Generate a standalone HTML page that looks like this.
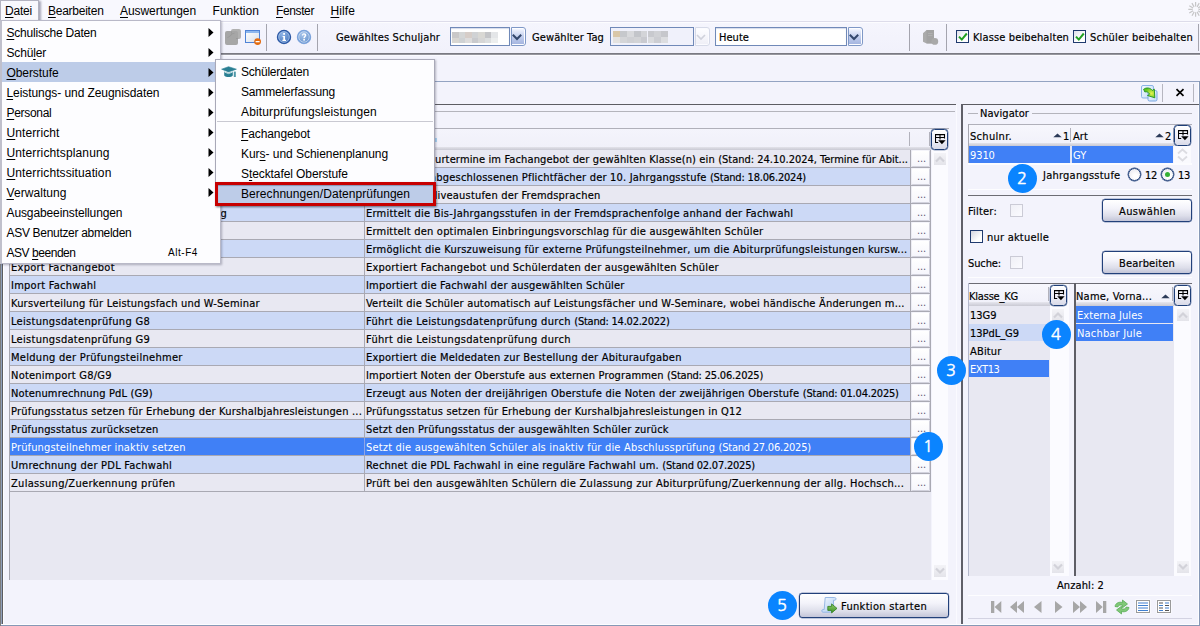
<!DOCTYPE html>
<html lang="de"><head><meta charset="utf-8"><title>ASV</title>
<style>
html,body{margin:0;padding:0}
body{width:1200px;height:626px;overflow:hidden;position:relative;background:#f3f3fc;color:#000}
div,span,svg{position:absolute;box-sizing:border-box}
.s{position:static}
.t{white-space:pre;line-height:16px;height:16px}
.j{font-family:"DejaVu Sans Condensed","Liberation Sans",sans-serif;font-size:11px;-webkit-text-stroke:.18px currentColor}
.m{font-family:"Liberation Sans",sans-serif;font-size:12px}
u{text-decoration:underline;text-underline-offset:2px;text-decoration-thickness:1px}
.btn{border:1px solid #22407a;border-radius:3px;box-shadow:0 0 0 .15px #22407a;background:linear-gradient(#ffffff 0%,#f3f3fa 40%,#dddeea 75%,#c3c5d8 100%)}
.cc{border:1px solid #1f3f78;border-radius:3.500px;box-shadow:0 0 0 .25px #1f3f78;background:linear-gradient(#ffffff 0%,#f0f0f8 50%,#d8dae8 100%)}
.circ{border-radius:50%;background:#0a84ff;color:#fff;font-family:"NanumGothic","Liberation Sans",sans-serif;text-align:center;text-indent:-1px;-webkit-text-stroke:.42px #fff}

</style></head>
<body>
<div style="left:0px;top:0px;width:1200px;height:21px;background:#f8f8fe;"></div>
<div style="left:0px;top:21px;width:1200px;height:1px;background:#dddcea;"></div>
<div style="left:0px;top:22px;width:1200px;height:1px;background:#fcfcff;"></div>
<svg style="left:1186px;top:1px" width="14" height="18" viewBox="0 0 14 18"><path d="M12.5 8.4L16.9 8.4M12.1 9.8L15.9 12.1M11.1 10.9L13.2 14.7M9.6 11.3L9.6 15.7M8.2 10.9L6.0 14.7M7.1 9.8L3.3 12.1M6.7 8.4L2.3 8.4M7.1 7.0L3.3 4.8M8.1 5.9L5.9 2.1M9.6 5.5L9.6 1.1M11.1 5.9L13.2 2.1M12.1 6.9L15.9 4.7" stroke="#c6c6c8" stroke-width="1.200" fill="none"/></svg>
<div style="left:0px;top:23px;width:1200px;height:30px;background:linear-gradient(#f5f5fd,#f1f1fb);"></div>
<div style="left:0px;top:53px;width:1200px;height:2px;background:linear-gradient(#6c6c74,#a4a4ac);"></div>
<div style="left:0px;top:55px;width:1200px;height:1px;background:#fbfbff;"></div>
<div style="left:231px;top:29px;width:10px;height:10px;background:#b1b1b1;border-radius:2px"></div>
<div style="left:225px;top:31px;width:13px;height:14px;background:#a6a6a6;border-radius:2px"></div>
<svg style="left:225px;top:29px" width="16" height="16" viewBox="0 0 16 16"><path d="M2.500 9c1.500-2.500 3-1 3.500-3s2.500-1 3.500-1.800M6.500 2.500v2M13 9.500h-2" fill="none" stroke="#979797" stroke-width=".8"/></svg>
<svg style="left:244px;top:29px" width="18" height="17" viewBox="0 0 18 17"><defs><linearGradient id="wg" x1="0" y1="0" x2="1" y2="1"><stop offset="0" stop-color="#fff"/><stop offset="1" stop-color="#d5deea"/></linearGradient></defs><rect x="1.5" y="1.5" width="14" height="12" fill="url(#wg)" stroke="#4f83d6"/><rect x="2" y="2" width="13" height="2" fill="#8db7ee"/><circle cx="13.6" cy="12.6" r="3.4" fill="#e36a0e"/><rect x="11.6" y="12" width="4" height="1.3" fill="#fff"/></svg>
<div style="left:266px;top:24px;width:1px;height:27px;background:#a4a4ae;"></div>
<svg style="left:276px;top:29px" width="16" height="16" viewBox="0 0 16 16"><defs><radialGradient id="ig" cx=".4" cy=".3" r=".8"><stop offset="0" stop-color="#8fb4e6"/><stop offset="1" stop-color="#3f6fb6"/></radialGradient></defs><circle cx="8" cy="8" r="6.6" fill="url(#ig)" stroke="#2c58a4" stroke-width="1.2"/><circle cx="8" cy="8" r="5.2" fill="none" stroke="#a9c4ea" stroke-width=".7"/><rect x="7.2" y="4" width="1.8" height="1.8" fill="#fff"/><path d="M6.6 7h2.4v3.8h1v1.1H6.4v-1.1h.9V8.1h-.7z" fill="#fff"/></svg>
<svg style="left:296px;top:29px" width="16" height="16" viewBox="0 0 16 16"><defs><radialGradient id="hg" cx=".4" cy=".3" r=".8"><stop offset="0" stop-color="#a9c6ec"/><stop offset="1" stop-color="#5e8cc8"/></radialGradient></defs><circle cx="8" cy="8" r="6.6" fill="url(#hg)" stroke="#7ba3dc" stroke-width="1.2"/><circle cx="8" cy="8" r="5.2" fill="none" stroke="#c9dcf4" stroke-width=".8"/><path d="M5.9 6.6c0-1.5 1-2.4 2.2-2.4s2.2.8 2.2 2c0 1.5-1.5 1.6-1.5 3H7.4c0-1.7 1.3-1.9 1.3-2.9 0-.5-.3-.8-.7-.8s-.8.3-.8 1.100z" fill="#fff"/><rect x="7.300" y="10" width="1.600" height="1.600" fill="#fff"/></svg>
<div style="left:317px;top:24px;width:1px;height:27px;background:#a4a4ae;"></div>
<span class="t j" style="top:30px;left:336px;letter-spacing:0.14px;">Gewähltes Schuljahr</span>
<div style="left:450px;top:27px;width:60px;height:19px;background:#fff;border:1px solid #7089b8;box-shadow:inset 0 1px 1px #d5dbec"></div>
<div style="left:511px;top:27px;width:15px;height:19px;background:#fdfdff;border:1px solid #7f98c6;border-radius:0 3px 3px 0"></div>
<div style="left:511.5px;top:29px;width:12.5px;height:15px;background:linear-gradient(#f2f5ff,#c3cfee 50%,#a5b5e0);"></div>
<svg style="left:512px;top:33.500px" width="10" height="7" viewBox="0 0 10 7"><path d="M.8 .8l4.200 4.200 4.200-4.200" fill="none" stroke="#33476c" stroke-width="2"/></svg>
<div style="left:452.0px;top:32px;width:6.5px;height:5.5px;background:#c9c8c8;"></div>
<div style="left:452.0px;top:37.5px;width:6.5px;height:5.5px;background:#d8d6d2;"></div>
<div style="left:458.5px;top:32px;width:6.5px;height:5.5px;background:#d4d6d6;"></div>
<div style="left:458.5px;top:37.5px;width:6.5px;height:5.5px;background:#cfd2d4;"></div>
<div style="left:465.0px;top:32px;width:6.5px;height:5.5px;background:#d6cdc8;"></div>
<div style="left:465.0px;top:37.5px;width:6.5px;height:5.5px;background:#dddcdc;"></div>
<div style="left:471.5px;top:32px;width:6.5px;height:5.5px;background:#d0d2d4;"></div>
<div style="left:471.5px;top:37.5px;width:6.5px;height:5.5px;background:#c9cacd;"></div>
<div style="left:478.0px;top:32px;width:6.5px;height:5.5px;background:#d9d8d4;"></div>
<div style="left:478.0px;top:37.5px;width:6.5px;height:5.5px;background:#d6d6d6;"></div>
<div style="left:484.5px;top:32px;width:6.5px;height:5.5px;background:#c4c5c8;"></div>
<div style="left:484.5px;top:37.5px;width:6.5px;height:5.5px;background:#dcdedf;"></div>
<div style="left:491.0px;top:32px;width:6.5px;height:5.5px;background:#e4e6e8;"></div>
<div style="left:491.0px;top:37.5px;width:6.5px;height:5.5px;background:#eceeee;"></div>
<span class="t j" style="top:30px;left:532px;letter-spacing:0.1px;">Gewählter Tag</span>
<div style="left:610px;top:27px;width:84px;height:19px;background:#f0f1fb;border:1px solid #7089b8"></div>
<div style="left:695px;top:27px;width:15px;height:19px;background:#fbfbff;border:1px solid #d6dae8;border-radius:0 3px 3px 0"></div>
<div style="left:695.5px;top:29px;width:12.5px;height:15px;background:linear-gradient(#fdfdff,#efeff7);"></div>
<svg style="left:696px;top:33.500px" width="10" height="7" viewBox="0 0 10 7"><path d="M1 1l4 4 4-4" fill="none" stroke="#d0d2dc" stroke-width="1.700"/></svg>
<div style="left:613.0px;top:31px;width:6.9px;height:6px;background:#d9c7a8;"></div>
<div style="left:613.0px;top:37px;width:6.9px;height:6px;background:#e4e2e0;"></div>
<div style="left:619.9px;top:31px;width:6.9px;height:6px;background:#c6c8cc;"></div>
<div style="left:619.9px;top:37px;width:6.9px;height:6px;background:#d4d5d8;"></div>
<div style="left:626.8px;top:31px;width:6.9px;height:6px;background:#d8d9dc;"></div>
<div style="left:626.8px;top:37px;width:6.9px;height:6px;background:#cfd0d4;"></div>
<div style="left:633.7px;top:31px;width:6.9px;height:6px;background:#c3c5ca;"></div>
<div style="left:633.7px;top:37px;width:6.9px;height:6px;background:#d2d3d6;"></div>
<div style="left:640.6px;top:31px;width:6.9px;height:6px;background:#d3d4d8;"></div>
<div style="left:640.6px;top:37px;width:6.9px;height:6px;background:#c9cad0;"></div>
<div style="left:647.5px;top:31px;width:6.9px;height:6px;background:#c8c9ce;"></div>
<div style="left:647.5px;top:37px;width:6.9px;height:6px;background:#d9dadd;"></div>
<div style="left:654.4px;top:31px;width:6.9px;height:6px;background:#d0d1d5;"></div>
<div style="left:654.4px;top:37px;width:6.9px;height:6px;background:#cccdd2;"></div>
<div style="left:661.3px;top:31px;width:6.9px;height:6px;background:#c6c7cc;"></div>
<div style="left:661.3px;top:37px;width:6.9px;height:6px;background:#dcdde0;"></div>
<div style="left:715px;top:27px;width:132px;height:19px;background:#fff;border:1px solid #7089b8;box-shadow:inset 0 1px 1px #d5dbec"></div>
<div style="left:848px;top:27px;width:15px;height:19px;background:#fdfdff;border:1px solid #7f98c6;border-radius:0 3px 3px 0"></div>
<div style="left:848.5px;top:29px;width:12.5px;height:15px;background:linear-gradient(#f2f5ff,#c3cfee 50%,#a5b5e0);"></div>
<svg style="left:849px;top:33.500px" width="10" height="7" viewBox="0 0 10 7"><path d="M.8 .8l4.200 4.200 4.200-4.200" fill="none" stroke="#33476c" stroke-width="2"/></svg>
<span class="t j" style="top:30px;left:719px;letter-spacing:0.04px;">Heute</span>
<div style="left:909px;top:24px;width:1px;height:27px;background:#a4a4ae;"></div>
<svg style="left:922px;top:29px" width="18" height="17" viewBox="0 0 18 17"><path d="M1 4.200L4.600 1H12v13.400H4.600L1 12.800z" fill="#ababab"/><path d="M4.600 1H12v13.400H4.600z" fill="#a3a3a3"/><path d="M6 4.500h4.500M6 6.500h4.500" stroke="#b4b4b4" stroke-width=".8"/><circle cx="12.800" cy="12.400" r="3.400" fill="#a9a9a9"/></svg>
<div style="left:946px;top:24px;width:1px;height:27px;background:#a4a4ae;"></div>
<div style="left:956px;top:30px;width:13px;height:13px;background:linear-gradient(135deg,#dfe1ea,#ffffff 60%);border:1px solid #1f3a6e"></div>
<svg style="left:958px;top:32px" width="10" height="10" viewBox="0 0 10 10"><path d="M1 4.600l2.800 3L8.800 1.500" fill="none" stroke="#21a121" stroke-width="2"/></svg>
<span class="t j" style="top:30px;left:973px;letter-spacing:0.13px;">Klasse beibehalten</span>
<div style="left:1073px;top:30px;width:13px;height:13px;background:linear-gradient(135deg,#dfe1ea,#ffffff 60%);border:1px solid #1f3a6e"></div>
<svg style="left:1075px;top:32px" width="10" height="10" viewBox="0 0 10 10"><path d="M1 4.600l2.800 3L8.800 1.500" fill="none" stroke="#21a121" stroke-width="2"/></svg>
<span class="t j" style="top:30px;left:1090px;letter-spacing:0.2px;">Schüler beibehalten</span>
<div style="left:1198px;top:24px;width:1px;height:27px;background:#a4a4ae;"></div>
<div style="left:0px;top:81px;width:1199px;height:1px;background:#93a3c2;"></div>
<div style="left:1198px;top:82px;width:1px;height:543px;background:#fdfdff;"></div>
<div style="left:1199px;top:81px;width:1px;height:545px;background:#8698b6;"></div>
<svg style="left:1141px;top:85px" width="17" height="17" viewBox="0 0 17 17"><defs><linearGradient id="gb" x1="0" y1="0" x2="1" y2="1"><stop offset="0" stop-color="#f2f8ff"/><stop offset="1" stop-color="#c4dcf6"/></linearGradient><radialGradient id="ga" cx=".7" cy=".55" r=".6"><stop offset="0" stop-color="#e4f24e"/><stop offset="1" stop-color="#5cc420"/></radialGradient></defs><rect x=".5" y=".5" width="12" height="12.500" rx="1.500" fill="url(#gb)" stroke="#8bb4e6"/><rect x="7" y="5.500" width="9" height="10.500" rx="1.500" fill="url(#gb)" stroke="#7aa8e2"/><path d="M2.600 4.300C5 2.300 9.200 2.500 11.300 5.400l2-1.300.5 8.700-7.300-2.300 2.100-1.300C7.400 6.900 5.300 6.300 3.900 7z" fill="url(#ga)" stroke="#1f901f" stroke-width=".9" stroke-linejoin="round"/></svg>
<div style="left:1162px;top:84px;width:1px;height:18px;background:#b6b6c0;"></div>
<svg style="left:1175px;top:88px" width="10" height="9" viewBox="0 0 10 9"><path d="M1.500 1.200l7 6.600M8.500 1.200l-7 6.600" stroke="#000" stroke-width="1.700"/></svg>
<div style="left:1193px;top:84px;width:1px;height:18px;background:#b6b6c0;"></div>
<div style="left:2px;top:104px;width:954px;height:1px;background:#5c5c62;"></div>
<div style="left:0px;top:82px;width:1px;height:544px;background:#7c7c7c;"></div>
<div style="left:1px;top:82px;width:1px;height:544px;background:#8fa0bc;"></div>
<div style="left:2px;top:104px;width:1px;height:520px;background:#5c5c60;"></div>
<div style="left:3px;top:105px;width:1px;height:519px;background:#fdfdff;"></div>
<div style="left:4px;top:111px;width:951px;height:1px;background:#b4b4bc;"></div>
<div style="left:1px;top:624px;width:1198px;height:1px;background:#fdfdff;"></div>
<div style="left:1px;top:625px;width:1199px;height:1px;background:#8698b6;"></div>
<div style="left:9px;top:128px;width:940px;height:1px;background:#b0b0ba;"></div>
<div style="left:9px;top:128px;width:1px;height:452px;background:#a6a6b0;"></div>
<div style="left:10px;top:129px;width:921px;height:19px;background:linear-gradient(#f4f4fc,#f0f0f9);"></div>
<div style="left:10px;top:147px;width:921px;height:3px;background:linear-gradient(#e2e2ea,#c9c9d3);"></div>
<div style="left:364px;top:132px;width:1px;height:14px;background:#b2b2bc;"></div>
<div style="left:909px;top:132px;width:1px;height:14px;background:#b2b2bc;"></div>
<div style="left:929px;top:132px;width:1px;height:14px;background:#b2b2bc;"></div>
<div style="left:435px;top:138px;width:2px;height:4px;background:#a8d4f4;"></div>
<div style="left:10px;top:150px;width:921px;height:430px;background:#e8e8f2;"></div>
<div style="left:932px;top:150px;width:16px;height:430px;background:#fbfbff;"></div>
<div style="left:10px;top:150px;width:900px;height:17px;background:#e8e8f2;"></div>
<div style="left:10px;top:167px;width:921px;height:1px;background:#a9a9b3;"></div>
<div style="left:364px;top:150px;width:1px;height:17px;background:#a9a9b3;"></div>
<div style="left:910px;top:150px;width:1px;height:18px;background:#a9a9b3;"></div>
<div style="left:911px;top:150px;width:19px;height:17px;background:linear-gradient(#ffffff,#f6f6fc);border:1px solid #d2d2dd;border-top-color:#f4f4fa;border-left-color:#ececf4;border-radius:2px"></div>
<span class="t j" style="top:151px;left:917px;letter-spacing:-0.15px;color:#5e5672;-webkit-text-stroke:0;">...</span>
<div style="left:930px;top:150px;width:1px;height:18px;background:#a9a9b3;"></div>
<div style="left:10px;top:168px;width:900px;height:17px;background:#ccd9f6;"></div>
<div style="left:10px;top:185px;width:921px;height:1px;background:#a9a9b3;"></div>
<div style="left:364px;top:168px;width:1px;height:17px;background:#a9a9b3;"></div>
<div style="left:910px;top:168px;width:1px;height:18px;background:#a9a9b3;"></div>
<div style="left:911px;top:168px;width:19px;height:17px;background:linear-gradient(#ffffff,#f6f6fc);border:1px solid #d2d2dd;border-top-color:#f4f4fa;border-left-color:#ececf4;border-radius:2px"></div>
<span class="t j" style="top:169px;left:917px;letter-spacing:-0.15px;color:#5e5672;-webkit-text-stroke:0;">...</span>
<div style="left:930px;top:168px;width:1px;height:18px;background:#a9a9b3;"></div>
<div style="left:10px;top:186px;width:900px;height:17px;background:#e8e8f2;"></div>
<div style="left:10px;top:203px;width:921px;height:1px;background:#a9a9b3;"></div>
<div style="left:364px;top:186px;width:1px;height:17px;background:#a9a9b3;"></div>
<div style="left:910px;top:186px;width:1px;height:18px;background:#a9a9b3;"></div>
<div style="left:911px;top:186px;width:19px;height:17px;background:linear-gradient(#ffffff,#f6f6fc);border:1px solid #d2d2dd;border-top-color:#f4f4fa;border-left-color:#ececf4;border-radius:2px"></div>
<span class="t j" style="top:187px;left:917px;letter-spacing:-0.15px;color:#5e5672;-webkit-text-stroke:0;">...</span>
<div style="left:930px;top:186px;width:1px;height:18px;background:#a9a9b3;"></div>
<div style="left:10px;top:204px;width:900px;height:17px;background:#ccd9f6;"></div>
<div style="left:10px;top:221px;width:921px;height:1px;background:#a9a9b3;"></div>
<div style="left:364px;top:204px;width:1px;height:17px;background:#a9a9b3;"></div>
<div style="left:910px;top:204px;width:1px;height:18px;background:#a9a9b3;"></div>
<div style="left:911px;top:204px;width:19px;height:17px;background:linear-gradient(#ffffff,#f6f6fc);border:1px solid #d2d2dd;border-top-color:#f4f4fa;border-left-color:#ececf4;border-radius:2px"></div>
<span class="t j" style="top:205px;left:917px;letter-spacing:-0.15px;color:#5e5672;-webkit-text-stroke:0;">...</span>
<div style="left:930px;top:204px;width:1px;height:18px;background:#a9a9b3;"></div>
<span class="t j" style="top:206px;left:366px;letter-spacing:0.24px;">Ermittelt die Bis-Jahrgangsstufen in der Fremdsprachenfolge anhand der Fachwahl</span>
<div style="left:10px;top:222px;width:900px;height:17px;background:#e8e8f2;"></div>
<div style="left:10px;top:239px;width:921px;height:1px;background:#a9a9b3;"></div>
<div style="left:364px;top:222px;width:1px;height:17px;background:#a9a9b3;"></div>
<div style="left:910px;top:222px;width:1px;height:18px;background:#a9a9b3;"></div>
<div style="left:911px;top:222px;width:19px;height:17px;background:linear-gradient(#ffffff,#f6f6fc);border:1px solid #d2d2dd;border-top-color:#f4f4fa;border-left-color:#ececf4;border-radius:2px"></div>
<span class="t j" style="top:223px;left:917px;letter-spacing:-0.15px;color:#5e5672;-webkit-text-stroke:0;">...</span>
<div style="left:930px;top:222px;width:1px;height:18px;background:#a9a9b3;"></div>
<span class="t j" style="top:224px;left:366px;letter-spacing:0.21px;">Ermittelt den optimalen Einbringungsvorschlag für die ausgewählten Schüler</span>
<div style="left:10px;top:240px;width:900px;height:17px;background:#ccd9f6;"></div>
<div style="left:10px;top:257px;width:921px;height:1px;background:#a9a9b3;"></div>
<div style="left:364px;top:240px;width:1px;height:17px;background:#a9a9b3;"></div>
<div style="left:910px;top:240px;width:1px;height:18px;background:#a9a9b3;"></div>
<div style="left:911px;top:240px;width:19px;height:17px;background:linear-gradient(#ffffff,#f6f6fc);border:1px solid #d2d2dd;border-top-color:#f4f4fa;border-left-color:#ececf4;border-radius:2px"></div>
<span class="t j" style="top:241px;left:917px;letter-spacing:-0.15px;color:#5e5672;-webkit-text-stroke:0;">...</span>
<div style="left:930px;top:240px;width:1px;height:18px;background:#a9a9b3;"></div>
<span class="t j" style="top:242px;left:366px;letter-spacing:0.24px;">Ermöglicht die Kurszuweisung für externe Prüfungsteilnehmer, um die Abiturprüfungsleistungen kursw...</span>
<div style="left:10px;top:258px;width:900px;height:17px;background:#e8e8f2;"></div>
<div style="left:10px;top:275px;width:921px;height:1px;background:#a9a9b3;"></div>
<div style="left:364px;top:258px;width:1px;height:17px;background:#a9a9b3;"></div>
<div style="left:910px;top:258px;width:1px;height:18px;background:#a9a9b3;"></div>
<div style="left:911px;top:258px;width:19px;height:17px;background:linear-gradient(#ffffff,#f6f6fc);border:1px solid #d2d2dd;border-top-color:#f4f4fa;border-left-color:#ececf4;border-radius:2px"></div>
<span class="t j" style="top:259px;left:917px;letter-spacing:-0.15px;color:#5e5672;-webkit-text-stroke:0;">...</span>
<div style="left:930px;top:258px;width:1px;height:18px;background:#a9a9b3;"></div>
<span class="t j" style="top:260px;left:11px;letter-spacing:0.27px;">Export Fachangebot</span>
<span class="t j" style="top:260px;left:366px;letter-spacing:0.22px;">Exportiert Fachangebot und Schülerdaten der ausgewählten Schüler</span>
<div style="left:10px;top:276px;width:900px;height:17px;background:#ccd9f6;"></div>
<div style="left:10px;top:293px;width:921px;height:1px;background:#a9a9b3;"></div>
<div style="left:364px;top:276px;width:1px;height:17px;background:#a9a9b3;"></div>
<div style="left:910px;top:276px;width:1px;height:18px;background:#a9a9b3;"></div>
<div style="left:911px;top:276px;width:19px;height:17px;background:linear-gradient(#ffffff,#f6f6fc);border:1px solid #d2d2dd;border-top-color:#f4f4fa;border-left-color:#ececf4;border-radius:2px"></div>
<span class="t j" style="top:277px;left:917px;letter-spacing:-0.15px;color:#5e5672;-webkit-text-stroke:0;">...</span>
<div style="left:930px;top:276px;width:1px;height:18px;background:#a9a9b3;"></div>
<span class="t j" style="top:278px;left:11px;letter-spacing:0.25px;">Import Fachwahl</span>
<span class="t j" style="top:278px;left:366px;letter-spacing:0.2px;">Importiert die Fachwahl der ausgewählten Schüler</span>
<div style="left:10px;top:294px;width:900px;height:17px;background:#e8e8f2;"></div>
<div style="left:10px;top:311px;width:921px;height:1px;background:#a9a9b3;"></div>
<div style="left:364px;top:294px;width:1px;height:17px;background:#a9a9b3;"></div>
<div style="left:910px;top:294px;width:1px;height:18px;background:#a9a9b3;"></div>
<div style="left:911px;top:294px;width:19px;height:17px;background:linear-gradient(#ffffff,#f6f6fc);border:1px solid #d2d2dd;border-top-color:#f4f4fa;border-left-color:#ececf4;border-radius:2px"></div>
<span class="t j" style="top:295px;left:917px;letter-spacing:-0.15px;color:#5e5672;-webkit-text-stroke:0;">...</span>
<div style="left:930px;top:294px;width:1px;height:18px;background:#a9a9b3;"></div>
<span class="t j" style="top:296px;left:11px;letter-spacing:0.2px;">Kursverteilung für Leistungsfach und W-Seminar</span>
<span class="t j" style="top:296px;left:366px;letter-spacing:0.19px;">Verteilt die Schüler automatisch auf Leistungsfächer und W-Seminare, wobei händische Änderungen m...</span>
<div style="left:10px;top:312px;width:900px;height:17px;background:#ccd9f6;"></div>
<div style="left:10px;top:329px;width:921px;height:1px;background:#a9a9b3;"></div>
<div style="left:364px;top:312px;width:1px;height:17px;background:#a9a9b3;"></div>
<div style="left:910px;top:312px;width:1px;height:18px;background:#a9a9b3;"></div>
<div style="left:911px;top:312px;width:19px;height:17px;background:linear-gradient(#ffffff,#f6f6fc);border:1px solid #d2d2dd;border-top-color:#f4f4fa;border-left-color:#ececf4;border-radius:2px"></div>
<span class="t j" style="top:313px;left:917px;letter-spacing:-0.15px;color:#5e5672;-webkit-text-stroke:0;">...</span>
<div style="left:930px;top:312px;width:1px;height:18px;background:#a9a9b3;"></div>
<span class="t j" style="top:314px;left:11px;letter-spacing:0.3px;">Leistungsdatenprüfung G8</span>
<span class="t j" style="top:314px;left:366px;"><span class="s" style="letter-spacing:0.32px">Führt die Leistungsdatenprüfung durch </span><span class="s" style="letter-spacing:-0.23px">(Stand: 14.02.2022)</span></span>
<div style="left:10px;top:330px;width:900px;height:17px;background:#e8e8f2;"></div>
<div style="left:10px;top:347px;width:921px;height:1px;background:#a9a9b3;"></div>
<div style="left:364px;top:330px;width:1px;height:17px;background:#a9a9b3;"></div>
<div style="left:910px;top:330px;width:1px;height:18px;background:#a9a9b3;"></div>
<div style="left:911px;top:330px;width:19px;height:17px;background:linear-gradient(#ffffff,#f6f6fc);border:1px solid #d2d2dd;border-top-color:#f4f4fa;border-left-color:#ececf4;border-radius:2px"></div>
<span class="t j" style="top:331px;left:917px;letter-spacing:-0.15px;color:#5e5672;-webkit-text-stroke:0;">...</span>
<div style="left:930px;top:330px;width:1px;height:18px;background:#a9a9b3;"></div>
<span class="t j" style="top:332px;left:11px;letter-spacing:0.3px;">Leistungsdatenprüfung G9</span>
<span class="t j" style="top:332px;left:366px;letter-spacing:0.32px;">Führt die Leistungsdatenprüfung durch</span>
<div style="left:10px;top:348px;width:900px;height:17px;background:#ccd9f6;"></div>
<div style="left:10px;top:365px;width:921px;height:1px;background:#a9a9b3;"></div>
<div style="left:364px;top:348px;width:1px;height:17px;background:#a9a9b3;"></div>
<div style="left:910px;top:348px;width:1px;height:18px;background:#a9a9b3;"></div>
<div style="left:911px;top:348px;width:19px;height:17px;background:linear-gradient(#ffffff,#f6f6fc);border:1px solid #d2d2dd;border-top-color:#f4f4fa;border-left-color:#ececf4;border-radius:2px"></div>
<span class="t j" style="top:349px;left:917px;letter-spacing:-0.15px;color:#5e5672;-webkit-text-stroke:0;">...</span>
<div style="left:930px;top:348px;width:1px;height:18px;background:#a9a9b3;"></div>
<span class="t j" style="top:350px;left:11px;letter-spacing:0.3px;">Meldung der Prüfungsteilnehmer</span>
<span class="t j" style="top:350px;left:366px;letter-spacing:0.22px;">Exportiert die Meldedaten zur Bestellung der Abituraufgaben</span>
<div style="left:10px;top:366px;width:900px;height:17px;background:#e8e8f2;"></div>
<div style="left:10px;top:383px;width:921px;height:1px;background:#a9a9b3;"></div>
<div style="left:364px;top:366px;width:1px;height:17px;background:#a9a9b3;"></div>
<div style="left:910px;top:366px;width:1px;height:18px;background:#a9a9b3;"></div>
<div style="left:911px;top:366px;width:19px;height:17px;background:linear-gradient(#ffffff,#f6f6fc);border:1px solid #d2d2dd;border-top-color:#f4f4fa;border-left-color:#ececf4;border-radius:2px"></div>
<span class="t j" style="top:367px;left:917px;letter-spacing:-0.15px;color:#5e5672;-webkit-text-stroke:0;">...</span>
<div style="left:930px;top:366px;width:1px;height:18px;background:#a9a9b3;"></div>
<span class="t j" style="top:368px;left:11px;letter-spacing:0.23px;">Notenimport G8/G9</span>
<span class="t j" style="top:368px;left:366px;"><span class="s" style="letter-spacing:0.16px">Importiert Noten der Oberstufe aus externen Programmen </span><span class="s" style="letter-spacing:-0.19px">(Stand: 25.06.2025)</span></span>
<div style="left:10px;top:384px;width:900px;height:17px;background:#ccd9f6;"></div>
<div style="left:10px;top:401px;width:921px;height:1px;background:#a9a9b3;"></div>
<div style="left:364px;top:384px;width:1px;height:17px;background:#a9a9b3;"></div>
<div style="left:910px;top:384px;width:1px;height:18px;background:#a9a9b3;"></div>
<div style="left:911px;top:384px;width:19px;height:17px;background:linear-gradient(#ffffff,#f6f6fc);border:1px solid #d2d2dd;border-top-color:#f4f4fa;border-left-color:#ececf4;border-radius:2px"></div>
<span class="t j" style="top:385px;left:917px;letter-spacing:-0.15px;color:#5e5672;-webkit-text-stroke:0;">...</span>
<div style="left:930px;top:384px;width:1px;height:18px;background:#a9a9b3;"></div>
<span class="t j" style="top:386px;left:11px;letter-spacing:0.15px;">Notenumrechnung PdL (G9)</span>
<span class="t j" style="top:386px;left:366px;"><span class="s" style="letter-spacing:0.23px">Erzeugt aus Noten der dreijährigen Oberstufe die Noten der zweijährigen Oberstufe </span><span class="s" style="letter-spacing:-0.19px">(Stand: 01.04.2025)</span></span>
<div style="left:10px;top:402px;width:900px;height:17px;background:#e8e8f2;"></div>
<div style="left:10px;top:419px;width:921px;height:1px;background:#a9a9b3;"></div>
<div style="left:364px;top:402px;width:1px;height:17px;background:#a9a9b3;"></div>
<div style="left:910px;top:402px;width:1px;height:18px;background:#a9a9b3;"></div>
<div style="left:911px;top:402px;width:19px;height:17px;background:linear-gradient(#ffffff,#f6f6fc);border:1px solid #d2d2dd;border-top-color:#f4f4fa;border-left-color:#ececf4;border-radius:2px"></div>
<span class="t j" style="top:403px;left:917px;letter-spacing:-0.15px;color:#5e5672;-webkit-text-stroke:0;">...</span>
<div style="left:930px;top:402px;width:1px;height:18px;background:#a9a9b3;"></div>
<span class="t j" style="top:404px;left:11px;letter-spacing:0.2px;">Prüfungsstatus setzen für Erhebung der Kurshalbjahresleistungen ...</span>
<span class="t j" style="top:404px;left:366px;letter-spacing:0.22px;">Prüfungsstatus setzen für Erhebung der Kurshalbjahresleistungen in Q12</span>
<div style="left:10px;top:420px;width:900px;height:17px;background:#ccd9f6;"></div>
<div style="left:10px;top:437px;width:921px;height:1px;background:#a9a9b3;"></div>
<div style="left:364px;top:420px;width:1px;height:17px;background:#a9a9b3;"></div>
<div style="left:910px;top:420px;width:1px;height:18px;background:#a9a9b3;"></div>
<div style="left:911px;top:420px;width:19px;height:17px;background:linear-gradient(#ffffff,#f6f6fc);border:1px solid #d2d2dd;border-top-color:#f4f4fa;border-left-color:#ececf4;border-radius:2px"></div>
<span class="t j" style="top:421px;left:917px;letter-spacing:-0.15px;color:#5e5672;-webkit-text-stroke:0;">...</span>
<div style="left:930px;top:420px;width:1px;height:18px;background:#a9a9b3;"></div>
<span class="t j" style="top:422px;left:11px;letter-spacing:0.17px;">Prüfungsstatus zurücksetzen</span>
<span class="t j" style="top:422px;left:366px;letter-spacing:0.18px;">Setzt den Prüfungsstatus der ausgewählten Schüler zurück</span>
<div style="left:10px;top:438px;width:900px;height:17px;background:#4080f6;"></div>
<div style="left:10px;top:455px;width:921px;height:1px;background:#a9a9b3;"></div>
<div style="left:364px;top:438px;width:1px;height:17px;background:#8fa5e6;"></div>
<div style="left:910px;top:438px;width:1px;height:18px;background:#a9a9b3;"></div>
<div style="left:911px;top:438px;width:19px;height:17px;background:linear-gradient(#ffffff,#f6f6fc);border:1px solid #d2d2dd;border-top-color:#f4f4fa;border-left-color:#ececf4;border-radius:2px"></div>
<span class="t j" style="top:439px;left:917px;letter-spacing:-0.15px;color:#5e5672;-webkit-text-stroke:0;">...</span>
<div style="left:930px;top:438px;width:1px;height:18px;background:#a9a9b3;"></div>
<span class="t j" style="top:440px;left:11px;letter-spacing:0.15px;color:#fff;-webkit-text-stroke:0;">Prüfungsteilnehmer inaktiv setzen</span>
<span class="t j" style="top:440px;left:366px;color:#fff;-webkit-text-stroke:0;"><span class="s" style="letter-spacing:0.19px">Setzt die ausgewählten Schüler als inaktiv für die Abschlussprüfung </span><span class="s" style="letter-spacing:-0.22px">(Stand 27.06.2025)</span></span>
<div style="left:10px;top:456px;width:900px;height:17px;background:#ccd9f6;"></div>
<div style="left:10px;top:473px;width:921px;height:1px;background:#a9a9b3;"></div>
<div style="left:364px;top:456px;width:1px;height:17px;background:#a9a9b3;"></div>
<div style="left:910px;top:456px;width:1px;height:18px;background:#a9a9b3;"></div>
<div style="left:911px;top:456px;width:19px;height:17px;background:linear-gradient(#ffffff,#f6f6fc);border:1px solid #d2d2dd;border-top-color:#f4f4fa;border-left-color:#ececf4;border-radius:2px"></div>
<span class="t j" style="top:457px;left:917px;letter-spacing:-0.15px;color:#5e5672;-webkit-text-stroke:0;">...</span>
<div style="left:930px;top:456px;width:1px;height:18px;background:#a9a9b3;"></div>
<span class="t j" style="top:458px;left:11px;letter-spacing:0.25px;">Umrechnung der PDL Fachwahl</span>
<span class="t j" style="top:458px;left:366px;"><span class="s" style="letter-spacing:0.21px">Rechnet die PDL Fachwahl in eine reguläre Fachwahl um. </span><span class="s" style="letter-spacing:-0.2px">(Stand 02.07.2025)</span></span>
<div style="left:10px;top:474px;width:900px;height:17px;background:#e8e8f2;"></div>
<div style="left:10px;top:491px;width:921px;height:1px;background:#a9a9b3;"></div>
<div style="left:364px;top:474px;width:1px;height:17px;background:#a9a9b3;"></div>
<div style="left:910px;top:474px;width:1px;height:18px;background:#a9a9b3;"></div>
<div style="left:911px;top:474px;width:19px;height:17px;background:linear-gradient(#ffffff,#f6f6fc);border:1px solid #d2d2dd;border-top-color:#f4f4fa;border-left-color:#ececf4;border-radius:2px"></div>
<span class="t j" style="top:475px;left:917px;letter-spacing:-0.15px;color:#5e5672;-webkit-text-stroke:0;">...</span>
<div style="left:930px;top:474px;width:1px;height:18px;background:#a9a9b3;"></div>
<span class="t j" style="top:476px;left:11px;letter-spacing:0.3px;">Zulassung/Zuerkennung prüfen</span>
<span class="t j" style="top:476px;left:366px;letter-spacing:0.25px;">Prüft bei den ausgewählten Schülern die Zulassung zur Abiturprüfung/Zuerkennung der allg. Hochsch...</span>
<div style="left:934px;top:153px;width:12px;height:12px;background:linear-gradient(#f3f3f7,#e4e4ea);"></div>
<svg style="left:934px;top:153px" width="12" height="12" viewBox="0 0 12 12"><path d="M2 8.500l4-4 4 4" fill="none" stroke="#d2d2d9" stroke-width="2.200"/></svg>
<div style="left:934px;top:565px;width:12px;height:12px;background:linear-gradient(#f3f3f7,#e4e4ea);"></div>
<svg style="left:934px;top:565px" width="12" height="12" viewBox="0 0 12 12"><path d="M2 3.500l4 4 4-4" fill="none" stroke="#d2d2d9" stroke-width="2.200"/></svg>
<div class="cc" style="left:931px;top:129px;width:17px;height:21px;"></div>
<svg style="left:935px;top:134px" width="11" height="11" viewBox="0 0 11 11"><path d="M.5 9V.600h9V4.500M.5 8.500h2.700M.5 3.500h9M5 .600v5" fill="none" stroke="#000" stroke-width="1.100"/><path d="M3.200 6.300h7.400L6.900 10.200z" fill="#000"/></svg>
<div class="btn" style="left:799px;top:593px;width:149.7px;height:24.6px;"></div>
<svg style="left:821px;top:596px" width="17" height="18" viewBox="0 0 17 18"><defs><linearGradient id="pg" x1="0" y1="0" x2="1" y2="1"><stop offset="0" stop-color="#f6faff"/><stop offset="1" stop-color="#a9c9f0"/></linearGradient><linearGradient id="ag" x1="0" y1="0" x2="0" y2="1"><stop offset="0" stop-color="#8fcb6a"/><stop offset="1" stop-color="#3f9426"/></linearGradient></defs><path d="M4.200 1.500h9.300c2 0 2 2.800 0 2.800h-1v9.200c0 1.800-1 2.700-2.300 2.700H2c-1.700 0-1.700-2.600 0-2.600h1.200z" fill="url(#pg)" stroke="#8eb2e2" stroke-width=".9"/><path d="M6.800 10.400h3.800V7.900l5.400 4.500-5.400 4.500v-2.500H6.800z" fill="url(#ag)" stroke="#2f7d1c" stroke-width=".8" stroke-linejoin="round"/></svg>
<span class="t j" style="top:599px;left:841px;letter-spacing:0.32px;">Funktion starten</span>
<div style="left:961px;top:104px;width:238px;height:1px;background:#5c5c62;"></div>
<div style="left:961.2px;top:104px;width:1.4px;height:520px;background:#5f5f68;"></div>
<div style="left:955.5px;top:105px;width:1px;height:519px;background:#fafaff;"></div>
<div style="left:968px;top:113px;width:10px;height:1px;background:#b4b4bc;"></div>
<div style="left:1032px;top:113px;width:160px;height:1px;background:#b4b4bc;"></div>
<span class="t j" style="top:106px;left:980px;letter-spacing:0.06px;">Navigator</span>
<div style="left:968px;top:124px;width:224px;height:1px;background:#b0b0ba;"></div>
<div style="left:968px;top:124px;width:1px;height:39px;background:#a6a6b0;"></div>
<div style="left:969px;top:125px;width:205px;height:19px;background:linear-gradient(#f7f7fd,#f1f1fa);"></div>
<div style="left:969px;top:143px;width:205px;height:3px;background:linear-gradient(#e2e2ea,#c9c9d3);"></div>
<div style="left:1070px;top:128px;width:1px;height:14px;background:#b2b2bc;"></div>
<div style="left:1173px;top:128px;width:1px;height:14px;background:#b2b2bc;"></div>
<span class="t j" style="top:129px;left:970px;letter-spacing:0.31px;">Schulnr.</span>
<span class="t j" style="top:129px;left:1073px;letter-spacing:0.09px;">Art</span>
<svg style="left:1053px;top:133px" width="9" height="5" viewBox="0 0 9 5"><path d="M.3 4.300L4.500 .4 8.700 4.300z" fill="#2b3a58"/></svg>
<span class="t j" style="top:129px;left:1063px;letter-spacing:0.22px;">1</span>
<svg style="left:1155px;top:133px" width="9" height="5" viewBox="0 0 9 5"><path d="M.3 4.300L4.500 .4 8.700 4.300z" fill="#2b3a58"/></svg>
<span class="t j" style="top:129px;left:1165px;letter-spacing:0.22px;">2</span>
<div class="cc" style="left:1174px;top:125px;width:17px;height:21px;"></div>
<svg style="left:1178px;top:130px" width="11" height="11" viewBox="0 0 11 11"><path d="M.5 9V.600h9V4.500M.5 8.500h2.700M.5 3.500h9M5 .600v5" fill="none" stroke="#000" stroke-width="1.100"/><path d="M3.200 6.300h7.400L6.900 10.200z" fill="#000"/></svg>
<div style="left:969px;top:146px;width:101px;height:17px;background:#4080f6;"></div>
<div style="left:1072px;top:146px;width:101px;height:17px;background:#4080f6;"></div>
<div style="left:1070px;top:146px;width:2px;height:17px;background:#dfe4f6;"></div>
<span class="t j" style="top:148px;left:970px;letter-spacing:-0.1px;color:#fff;-webkit-text-stroke:0;">9310</span>
<span class="t j" style="top:148px;left:1073px;letter-spacing:0.22px;color:#fff;-webkit-text-stroke:0;">GY</span>
<div style="left:1174px;top:146px;width:17px;height:17px;background:#fafafe;"></div>
<div style="left:968px;top:163px;width:224px;height:1.5px;background:#fcfcff;"></div>
<svg style="left:1176px;top:147px" width="13" height="16" viewBox="0 0 13 16"><path d="M2 6.500l4.500-4 4.500 4M2 9.500l4.500 4 4.500-4" fill="none" stroke="#dcdce2" stroke-width="1.800"/></svg>
<span class="t j" style="top:168px;left:1043px;letter-spacing:0.24px;">Jahrgangsstufe</span>
<div style="left:1128.0px;top:168.0px;width:13px;height:13px;background:radial-gradient(circle at 60% 65%,#ffffff 20%,#e4e4ec 100%);border:1px solid #1f3f78;box-shadow:0 0 0 .4px #1f3f78;border-radius:50%"></div>
<span class="t j" style="top:168px;left:1145px;letter-spacing:-0.3px;">12</span>
<div style="left:1161.0px;top:168.0px;width:13px;height:13px;background:radial-gradient(circle at 60% 65%,#ffffff 20%,#e4e4ec 100%);border:1px solid #1f3f78;box-shadow:0 0 0 .4px #1f3f78;border-radius:50%"></div>
<div style="left:1164.8px;top:171.8px;width:5.4px;height:5.4px;background:#35b035;border-radius:50%"></div>
<span class="t j" style="top:168px;left:1178px;letter-spacing:-0.3px;">13</span>
<div style="left:968px;top:189px;width:224px;height:1px;background:#fdfdff;"></div>
<div style="left:968px;top:195px;width:224px;height:1px;background:#6c6c74;"></div>
<span class="t j" style="top:204px;left:968px;letter-spacing:0.2px;">Filter:</span>
<div style="left:1010px;top:204px;width:13px;height:13px;background:linear-gradient(135deg,#f0f0f6,#fbfbff);border:1px solid #cbcbd6"></div>
<div class="btn" style="left:1102px;top:199px;width:90px;height:23px;"></div>
<span class="t j" style="top:204px;left:1119px;letter-spacing:0.36px;">Auswählen</span>
<div style="left:970px;top:230px;width:13px;height:13px;background:linear-gradient(135deg,#d4d6e0,#ffffff 70%);border:1px solid #1f3a6e"></div>
<span class="t j" style="top:230px;left:987px;letter-spacing:0.22px;">nur aktuelle</span>
<span class="t j" style="top:256px;left:968px;letter-spacing:-0.12px;">Suche:</span>
<div style="left:1010px;top:256px;width:13px;height:13px;background:linear-gradient(135deg,#f0f0f6,#fbfbff);border:1px solid #cbcbd6"></div>
<div class="btn" style="left:1102px;top:251px;width:90px;height:23px;"></div>
<span class="t j" style="top:256px;left:1119px;letter-spacing:0.16px;">Bearbeiten</span>
<div style="left:968px;top:277px;width:224px;height:1px;background:#fdfdff;"></div>
<div style="left:968px;top:283px;width:224px;height:1px;background:#6c6c74;"></div>
<div style="left:968px;top:283px;width:1px;height:293px;background:#b4b8cc;"></div>
<div style="left:969px;top:284px;width:81px;height:19px;background:linear-gradient(#f7f7fd,#f1f1fa);"></div>
<div style="left:969px;top:302px;width:81px;height:4px;background:linear-gradient(#e6e6ee,#c9c9d3);"></div>
<div style="left:1048px;top:287px;width:1px;height:14px;background:#b2b2bc;"></div>
<span class="t j" style="top:289px;left:969px;letter-spacing:-0.2px;">Klasse_KG</span>
<div style="left:969px;top:306px;width:81px;height:270px;background:#e8e8f2;"></div>
<div style="left:1050px;top:284px;width:19px;height:292px;background:#fbfbff;"></div>
<div class="cc" style="left:1050px;top:285px;width:17px;height:21px;"></div>
<svg style="left:1054px;top:290px" width="11" height="11" viewBox="0 0 11 11"><path d="M.5 9V.600h9V4.500M.5 8.500h2.700M.5 3.500h9M5 .600v5" fill="none" stroke="#000" stroke-width="1.100"/><path d="M3.200 6.300h7.400L6.900 10.200z" fill="#000"/></svg>
<div style="left:969px;top:306px;width:80px;height:17px;background:#e8e8f2;"></div>
<span class="t j" style="top:308px;left:970px;letter-spacing:-0.02px;">13G9</span>
<div style="left:969px;top:324px;width:80px;height:17px;background:#ccd9f6;"></div>
<span class="t j" style="top:326px;left:970px;letter-spacing:-0.03px;">13PdL_G9</span>
<div style="left:969px;top:342px;width:80px;height:17px;background:#e8e8f2;"></div>
<span class="t j" style="top:344px;left:970px;letter-spacing:0.16px;">ABitur</span>
<div style="left:969px;top:360px;width:80px;height:17px;background:#4080f6;"></div>
<span class="t j" style="top:362px;left:970px;letter-spacing:-0.4px;color:#fff;-webkit-text-stroke:0;">EXT13</span>
<div style="left:1052px;top:309px;width:12px;height:12px;background:linear-gradient(#f3f3f7,#e4e4ea);"></div>
<svg style="left:1052px;top:309px" width="12" height="12" viewBox="0 0 12 12"><path d="M2 8.500l4-4 4 4" fill="none" stroke="#d2d2d9" stroke-width="2.200"/></svg>
<div style="left:1052px;top:561px;width:12px;height:12px;background:linear-gradient(#f3f3f7,#e4e4ea);"></div>
<svg style="left:1052px;top:561px" width="12" height="12" viewBox="0 0 12 12"><path d="M2 3.500l4 4 4-4" fill="none" stroke="#d2d2d9" stroke-width="2.200"/></svg>
<div style="left:1074px;top:283px;width:118px;height:1px;background:#6c6c74;"></div>
<div style="left:1074px;top:283px;width:1.5px;height:293px;background:#5e5e66;"></div>
<div style="left:1076px;top:284px;width:98px;height:19px;background:linear-gradient(#f7f7fd,#f1f1fa);"></div>
<div style="left:1076px;top:302px;width:98px;height:4px;background:linear-gradient(#e6e6ee,#c9c9d3);"></div>
<div style="left:1172px;top:287px;width:1px;height:14px;background:#b2b2bc;"></div>
<span class="t j" style="top:289px;left:1076px;letter-spacing:0.21px;">Name, Vorna...</span>
<svg style="left:1161px;top:294px" width="9" height="5" viewBox="0 0 9 5"><path d="M.3 4.300L4.500 .4 8.700 4.300z" fill="#2b3a58"/></svg>
<div class="cc" style="left:1174px;top:285px;width:17px;height:21px;"></div>
<svg style="left:1178px;top:290px" width="11" height="11" viewBox="0 0 11 11"><path d="M.5 9V.600h9V4.500M.5 8.500h2.700M.5 3.500h9M5 .600v5" fill="none" stroke="#000" stroke-width="1.100"/><path d="M3.200 6.300h7.400L6.900 10.200z" fill="#000"/></svg>
<div style="left:1076px;top:306px;width:98px;height:270px;background:#e8e8f2;"></div>
<div style="left:1174px;top:306px;width:17px;height:270px;background:#fbfbff;"></div>
<div style="left:1076px;top:306px;width:97px;height:17px;background:#4080f6;"></div>
<span class="t j" style="top:308px;left:1077px;letter-spacing:0.07px;color:#fff;-webkit-text-stroke:0;">Externa Jules</span>
<div style="left:1076px;top:324px;width:97px;height:17px;background:#4080f6;"></div>
<span class="t j" style="top:326px;left:1077px;letter-spacing:0.18px;color:#fff;-webkit-text-stroke:0;">Nachbar Jule</span>
<div style="left:1177px;top:309px;width:12px;height:12px;background:linear-gradient(#f3f3f7,#e4e4ea);"></div>
<svg style="left:1177px;top:309px" width="12" height="12" viewBox="0 0 12 12"><path d="M2 8.500l4-4 4 4" fill="none" stroke="#d2d2d9" stroke-width="2.200"/></svg>
<div style="left:1177px;top:561px;width:12px;height:12px;background:linear-gradient(#f3f3f7,#e4e4ea);"></div>
<svg style="left:1177px;top:561px" width="12" height="12" viewBox="0 0 12 12"><path d="M2 3.500l4 4 4-4" fill="none" stroke="#d2d2d9" stroke-width="2.200"/></svg>
<span class="t j" style="top:578px;left:1057px;letter-spacing:0.1px;">Anzahl: 2</span>
<div style="left:968px;top:595px;width:224px;height:1px;background:#fdfdff;"></div>
<div style="left:968px;top:618px;width:224px;height:1px;background:#d3d3e2;"></div>
<svg style="left:991px;top:601px" width="16" height="12" viewBox="0 0 16 12"><path d="M0 0h3.300v12H0zM10.300 0v12L3.600 6z" fill="#a7a7a7"/></svg>
<svg style="left:1010px;top:601px" width="16" height="12" viewBox="0 0 16 12"><path d="M7 0v12L0 6zM14 0v12L7 6z" fill="#a7a7a7"/></svg>
<svg style="left:1033.5px;top:601px" width="16" height="12" viewBox="0 0 16 12"><path d="M7.500 0v12L0 6z" fill="#a7a7a7"/></svg>
<svg style="left:1055px;top:601px" width="16" height="12" viewBox="0 0 16 12"><path d="M0 0v12l7.500-6z" fill="#a7a7a7"/></svg>
<svg style="left:1073px;top:601px" width="16" height="12" viewBox="0 0 16 12"><path d="M0 0v12l7-6zM7 0v12l7-6z" fill="#a7a7a7"/></svg>
<svg style="left:1095.7px;top:601px" width="16" height="12" viewBox="0 0 16 12"><path d="M0 0v12l6.700-6zM7 0h3.300v12H7z" fill="#a7a7a7"/></svg>
<svg style="left:1113px;top:598px" width="18" height="18" viewBox="0 0 18 18"><path d="M2 8.500C2.500 5 6 3.500 9.500 4.500V2l5 4-5 3.800V7.300C7.500 6.500 5.500 7 4.800 9z" fill="#80c878" stroke="#4ca648" stroke-width=".7"/><path d="M16 9.500c-.5 3.500-4 5-7.500 4V16l-5-4 5-3.800v2.500c2 .8 4 .3 4.700-1.700z" fill="#80c878" stroke="#4ca648" stroke-width=".7"/></svg>
<svg style="left:1135px;top:599px" width="16" height="15" viewBox="0 0 16 15"><rect x=".5" y=".5" width="15" height="14" fill="#fff"/><rect x="1.500" y="1.500" width="13" height="12" fill="#fff" stroke="#9a9a9a"/><path d="M3 4h10M3 6.500h10M3 9h10M3 11.500h10" stroke="#3f7fd0" stroke-width="1.200"/></svg>
<svg style="left:1156px;top:599px" width="16" height="15" viewBox="0 0 16 15"><rect x=".5" y=".5" width="15" height="14" fill="#fff"/><rect x="1.500" y="1.500" width="13" height="12" fill="#fff" stroke="#9a9a9a"/><path d="M3 4h4M3 9h4M9 6.500h4M9 11.500h4" stroke="#555" stroke-width="1.200"/><path d="M9 4h4M9 9h4M3 6.500h4M3 11.500h4" stroke="#3f7fd0" stroke-width="1.200"/></svg>
<span class="t j" style="top:152px;left:435px;"><span class="s" style="letter-spacing:0.14px">urtermine im Fachangebot der gewählten Klasse(n) ein </span><span class="s" style="letter-spacing:-0.01px">(Stand: 24.10.2024, Termine für Abit...</span></span>
<span class="t j" style="top:170px;left:430px;"><span class="s" style="letter-spacing:0.2px">abgeschlossenen Pflichtfächer der 10. Jahrgangsstufe </span><span class="s" style="letter-spacing:-0.19px">(Stand: 18.06.2024)</span></span>
<span class="t j" style="top:188px;left:430px;letter-spacing:0.19px;">Niveaustufen der Fremdsprachen</span>
<span class="t j" style="top:206px;right:973px;letter-spacing:0.22px;">g</span>
<div style="left:0px;top:0px;width:38.5px;height:21px;background:#f8f8fd;border:1px solid #b2b2c0;border-bottom:none;box-shadow:2px 1px 2px rgba(100,100,125,.55)"></div>
<span class="t m" style="top:2.5px;left:5px;letter-spacing:-0.2px;"><u>D</u>atei</span>
<span class="t m" style="top:2.5px;left:48px;letter-spacing:-0.25px;"><u>B</u>earbeiten</span>
<span class="t m" style="top:2.5px;left:120px;letter-spacing:-0.06px;"><u>A</u>uswertungen</span>
<span class="t m" style="top:2.5px;left:212.5px;letter-spacing:0.06px;">Funktion</span>
<span class="t m" style="top:2.5px;left:276px;letter-spacing:-0.38px;"><u>F</u>enster</span>
<span class="t m" style="top:2.5px;left:330.5px;letter-spacing:0.1px;"><u>H</u>ilfe</span>
<div style="left:0px;top:20px;width:221px;height:244px;background:#fdfdff;border:1px solid #b9b9c8;border-left:2px solid #c0c0cc;box-shadow:1px 1px 2px rgba(60,60,80,.35)"></div>
<div style="left:2px;top:62px;width:217px;height:20px;background:#bdcce8;"></div>
<span class="t m" style="top:24.5px;left:6.5px;letter-spacing:-0.21px;"><u>S</u>chulische Daten</span>
<svg style="left:208px;top:27.5px" width="6" height="9" viewBox="0 0 6 9"><path d="M.5 0v9L5.500 4.500z" fill="#000"/></svg>
<span class="t m" style="top:44.5px;left:6.5px;letter-spacing:-0.17px;">Schü<u>l</u>er</span>
<svg style="left:208px;top:47.5px" width="6" height="9" viewBox="0 0 6 9"><path d="M.5 0v9L5.500 4.500z" fill="#000"/></svg>
<span class="t m" style="top:64.5px;left:6.5px;letter-spacing:-0.08px;"><u>O</u>berstufe</span>
<svg style="left:208px;top:67.5px" width="6" height="9" viewBox="0 0 6 9"><path d="M.5 0v9L5.500 4.500z" fill="#000"/></svg>
<span class="t m" style="top:84.5px;left:6.5px;letter-spacing:-0.07px;"><u>L</u>eistungs- und Zeugnisdaten</span>
<svg style="left:208px;top:87.5px" width="6" height="9" viewBox="0 0 6 9"><path d="M.5 0v9L5.500 4.500z" fill="#000"/></svg>
<span class="t m" style="top:104.5px;left:6.5px;letter-spacing:-0.3px;"><u>P</u>ersonal</span>
<svg style="left:208px;top:107.5px" width="6" height="9" viewBox="0 0 6 9"><path d="M.5 0v9L5.500 4.500z" fill="#000"/></svg>
<span class="t m" style="top:124.5px;left:6.5px;letter-spacing:0.1px;"><u>U</u>nterricht</span>
<svg style="left:208px;top:127.5px" width="6" height="9" viewBox="0 0 6 9"><path d="M.5 0v9L5.500 4.500z" fill="#000"/></svg>
<span class="t m" style="top:144.5px;left:6.5px;letter-spacing:0.13px;"><u>U</u>nterrichtsplanung</span>
<svg style="left:208px;top:147.5px" width="6" height="9" viewBox="0 0 6 9"><path d="M.5 0v9L5.500 4.500z" fill="#000"/></svg>
<span class="t m" style="top:164.5px;left:6.5px;letter-spacing:0.11px;"><u>U</u>nterrichtssituation</span>
<svg style="left:208px;top:167.5px" width="6" height="9" viewBox="0 0 6 9"><path d="M.5 0v9L5.500 4.500z" fill="#000"/></svg>
<span class="t m" style="top:184.5px;left:6.5px;letter-spacing:0.06px;"><u>V</u>erwaltung</span>
<svg style="left:208px;top:187.5px" width="6" height="9" viewBox="0 0 6 9"><path d="M.5 0v9L5.500 4.500z" fill="#000"/></svg>
<span class="t m" style="top:204.5px;left:6.5px;letter-spacing:-0.11px;">Ausgabeeinstellungen</span>
<span class="t m" style="top:224.5px;left:6.5px;letter-spacing:-0.31px;">ASV Benutzer abmelden</span>
<span class="t m" style="top:244.5px;left:6.5px;letter-spacing:-0.46px;">ASV <u>b</u>eenden</span>
<span class="t m" style="top:245px;left:168px;letter-spacing:-0.1px;font-size:10px;letter-spacing:.55px;">Alt-F4</span>
<div style="left:215px;top:59px;width:220px;height:147px;background:#fdfdff;border:1px solid #a9a9b8;box-shadow:1px 1px 2px rgba(60,60,80,.35)"></div>
<div style="left:217px;top:121px;width:216px;height:1px;background:#c9c9d2;"></div>
<div style="left:215px;top:182px;width:221px;height:24px;background:#bdcce8;border:3px solid #c70000;box-shadow:inset 0 1px 1px #8496b4, 1px 1px 2px rgba(0,0,0,.35)"></div>
<span class="t m" style="top:63.5px;left:241px;letter-spacing:-0.23px;">Schüler<u>d</u>aten</span>
<span class="t m" style="top:83.5px;left:241px;letter-spacing:-0.18px;">Sammelerfassung</span>
<span class="t m" style="top:103.5px;left:241px;letter-spacing:0.13px;">Abiturprüfungsleistungen</span>
<span class="t m" style="top:125.5px;left:241px;letter-spacing:-0.1px;"><u>F</u>achangebot</span>
<span class="t m" style="top:145.5px;left:241px;letter-spacing:-0.04px;">Kur<u>s</u>- und Schienenplanung</span>
<span class="t m" style="top:165.5px;left:241px;letter-spacing:-0.09px;">S<u>t</u>ecktafel Oberstufe</span>
<span class="t m" style="top:186.0px;left:241px;letter-spacing:0.06px;">Berechnungen/Datenprüfungen</span>
<svg style="left:221px;top:65.500px" width="16" height="12" viewBox="0 0 16 12"><path d="M.6 3.200L7.500.700l7.900 2.500-7.900 2.700z" fill="#2a7f93" stroke="#2a7f93" stroke-width=".6" stroke-linejoin="round"/><path d="M3.200 5.400v4c1.600 2 7.200 2 8.600 0v-4L7.500 7z" fill="#2a7f93"/><path d="M3.600 6.100L7.500 7.600l4-1.500" fill="none" stroke="#eef6f8" stroke-width=".8"/><rect x="12.800" y="5.600" width="2" height="5.400" fill="#4f98a8"/></svg>
<div class="circ" style="left:913.8px;top:431.7px;width:29.400px;height:29.400px;line-height:28.500px;font-size:16.500px">1</div>
<div class="circ" style="left:1007.8px;top:163.9px;width:29.400px;height:29.400px;line-height:28.500px;font-size:16.500px">2</div>
<div class="circ" style="left:936.7px;top:355.8px;width:29.400px;height:29.400px;line-height:28.500px;font-size:16.500px">3</div>
<div class="circ" style="left:1041.8px;top:319.9px;width:29.400px;height:29.400px;line-height:28.500px;font-size:16.500px">4</div>
<div class="circ" style="left:767.8px;top:590.8px;width:29.400px;height:29.400px;line-height:28.500px;font-size:16.500px">5</div>
</body></html>
